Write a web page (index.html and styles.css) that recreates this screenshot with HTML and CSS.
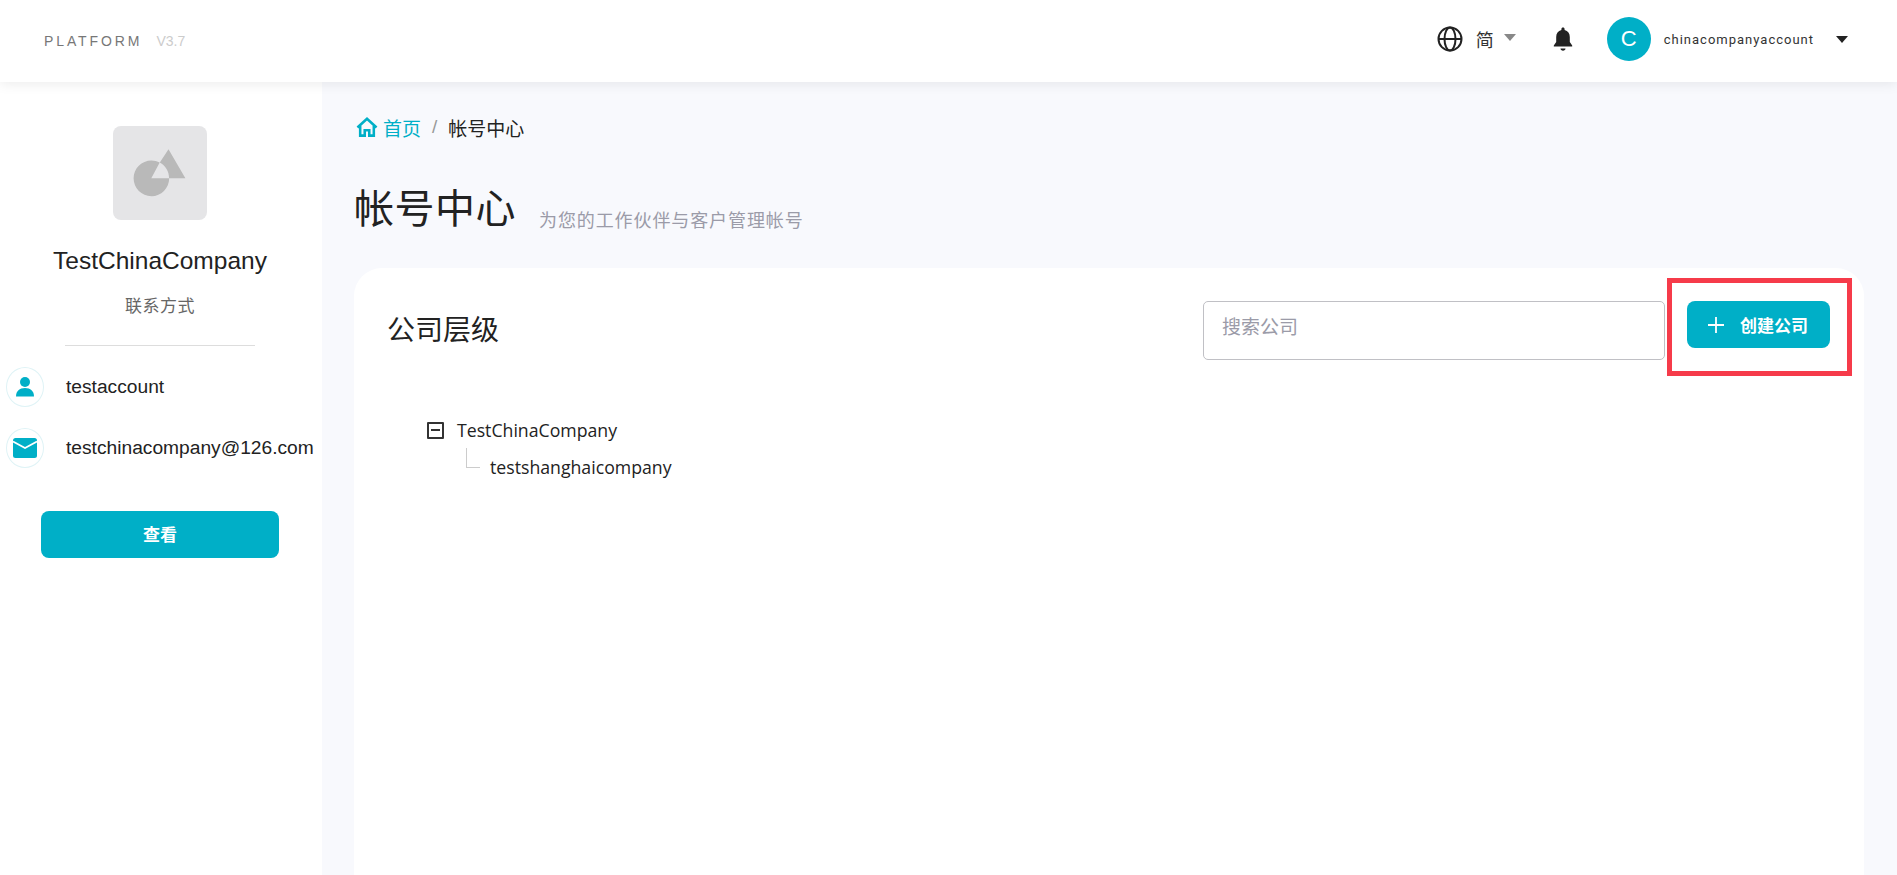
FILE: index.html
```html
<!DOCTYPE html>
<html lang="zh-CN">
<head>
<meta charset="utf-8">
<title>帐号中心</title>
<link rel="stylesheet" href="styles.css">
</head>
<body>
<header class="topbar">
  <div class="brand"><span class="brand-name">PLATFORM</span><span class="brand-ver">V3.7</span></div>
  <div class="top-actions">
    <svg class="globe" viewBox="0 0 26 26" fill="none" stroke="#222" stroke-width="2"><circle cx="13" cy="13" r="11.5"/><ellipse cx="13" cy="13" rx="5.5" ry="11.5"/><path d="M1.5 13h23"/></svg>
    <span class="lang">简</span>
    <span class="caret caret-grey"></span>
    <svg class="bell" viewBox="0 0 20 24" fill="#222"><path d="M10 0.5c1 0 1.6.7 1.6 1.7v.7c3.4.8 5.2 3.6 5.2 7v5l2.4 3.6v1H.8v-1l2.4-3.6v-5c0-3.4 1.800-6.200 5.200-7v-.7c0-1 .6-1.700 1.600-1.700z"/><path d="M7.500 21.500h5c0 1.400-1.100 2.200-2.500 2.200s-2.500-.8-2.500-2.200z"/></svg>
    <span class="avatar">C</span>
    <span class="username">chinacompanyaccount</span>
    <span class="caret caret-dark"></span>
  </div>
</header>
<div class="layout">
  <aside class="sidebar">
    <div class="logo-box">
      <svg viewBox="0 0 54 48" width="54" height="48"><path fill="#b9b9b9" d="M18.500 11.500c3 0 5.800.7 8.200 2L18.300 29.200h17.900c0 9.900-8 18-17.700 18C8.600 47.200.6 39.200.6 29.300.6 19.500 8.600 11.500 18.500 11.500z"/><path fill="#b9b9b9" d="M35.500.2L52.400 29.200H36.100c0-6.700-3.700-12.500-9.300-15.600z"/></svg>
    </div>
    <div class="company">TestChinaCompany</div>
    <div class="contact-label">联系方式</div>
    <div class="divider"></div>
    <div class="contact-row">
      <span class="contact-icon"><svg viewBox="0 0 18 20" width="18" height="20" fill="#00afc7"><circle cx="9" cy="5" r="5"/><path d="M0 19.500c0-5.500 3.500-8.500 9-8.500s9 3 9 8.500z"/></svg></span>
      <span class="contact-text">testaccount</span>
    </div>
    <div class="contact-row">
      <span class="contact-icon"><svg viewBox="0 0 24 20" width="24" height="20"><rect width="24" height="20" rx="2.500" fill="#00afc7"/><path d="M0 3.500l12 6.500 12-6.500" fill="none" stroke="#fff" stroke-width="1.800"/></svg></span>
      <span class="contact-text">testchinacompany@126.com</span>
    </div>
    <button class="view-btn">查看</button>
  </aside>
  <main class="main">
    <nav class="crumbs">
      <svg class="home" viewBox="0 0 24 22" fill="none" stroke="#00afc7" stroke-width="2.800"><path d="M1.500 11.500L12 2l10.500 9.500"/><path d="M4.500 10v10.500h5v-6h5v6h5V10"/></svg>
      <span class="crumb-link">首页</span>
      <span class="crumb-sep">/</span>
      <span class="crumb-cur">帐号中心</span>
    </nav>
    <div class="page-head">
      <h1 class="page-title">帐号中心</h1>
      <span class="page-sub">为您的工作伙伴与客户管理帐号</span>
    </div>
    <section class="card">
      <div class="card-head">
        <h2 class="card-title">公司层级</h2>
        <div class="search">搜索公司</div>
        <div class="create-wrap">
          <button class="create-btn"><svg viewBox="0 0 16 16" width="16" height="16" stroke="#fff" stroke-width="1.800"><path d="M8 0v16M0 8h16"/></svg><span>创建公司</span></button>
          <span class="mark"></span>
        </div>
      </div>
      <div class="tree">
        <div class="tree-node"><span class="tree-toggle"></span><span>TestChinaCompany</span></div>
        <div class="tree-child"><span class="tree-line"></span><span>testshanghaicompany</span></div>
      </div>
    </section>
  </main>
</div>
</body>
</html>
```
FILE: styles.css
```css
* { box-sizing: border-box; }
html, body { margin: 0; height: 100%; overflow: hidden; }
body {
  display: flex;
  flex-direction: column;
  font-family: "Liberation Sans", "Noto Sans CJK SC", sans-serif;
  color: #222;
  background: #f8f9fd;
}
.topbar {
  position: relative;
  z-index: 2;
  flex: 0 0 82px;
  display: flex;
  align-items: center;
  justify-content: space-between;
  padding: 0 49px 0 44px;
  background: #fff;
  box-shadow: 0 2px 12px rgba(0, 0, 0, .08);
}
.brand { display: flex; align-items: center; gap: 14px; margin-top: -1px; }
.brand-name { font-size: 14px; letter-spacing: 2.9px; color: #777; }
.brand-ver { font-size: 14px; color: #ccc; }
.top-actions { display: flex; align-items: center; margin-top: -4px; }
.globe { width: 26px; height: 26px; }
.lang { font-size: 18px; margin-left: 13px; color: #333; }
.caret { width: 0; height: 0; border-left: 6px solid transparent; border-right: 6px solid transparent; border-top: 7px solid #888; }
.caret-grey { margin: -3px 0 0 10px; }
.caret-dark { border-top-color: #222; margin-left: 22px; }
.bell { width: 20px; height: 24px; margin-left: 37px; }
.avatar {
  width: 44px; height: 44px; margin-left: 34px;
  display: flex; align-items: center; justify-content: center;
  border-radius: 50%;
  background: #00afc7; color: #fff; font-size: 22px;
}
.username { font-family: Roboto, sans-serif; font-size: 13px; letter-spacing: 1px; color: #333; margin-left: 13px; }
.layout { flex: 1; display: flex; min-height: 0; }
.sidebar {
  flex: 0 0 322px;
  display: flex; flex-direction: column; align-items: center;
  padding: 44px 2px 0 0;
  background: #fff;
}
.logo-box {
  width: 94px; height: 94px;
  display: flex; align-items: center; justify-content: center;
  border-radius: 8px; background: #e5e5e7;
}
.company { margin-top: 26px; font-size: 24.5px; line-height: 30px; color: #222; }
.contact-label { margin-top: 19px; font-size: 17px; line-height: 24px; letter-spacing: .5px; color: #666; }
.divider { width: 190px; height: 1px; margin-top: 26px; background: #ddd; }
.contact-row { align-self: stretch; display: flex; align-items: center; gap: 22px; padding-left: 6px; height: 40px; margin-top: 21px; white-space: nowrap; }
.contact-icon {
  flex: 0 0 38px; height: 40px;
  display: flex; align-items: center; justify-content: center;
  border: 1px solid #dff3f6; border-radius: 50%;
}
.contact-text { font-size: 19.2px; color: #222; }
.view-btn {
  width: 238px; height: 47px; margin-top: 43px; padding: 0 0 2px;
  border: 0; border-radius: 8px;
  background: #00afc7; color: #fff;
  font: 700 17px "Liberation Sans", "Noto Sans CJK SC", sans-serif;
}
.main { flex: 1; min-width: 0; display: flex; flex-direction: column; padding: 32px 33px 0 32px; }
.crumbs { display: flex; align-items: center; height: 26px; font-size: 19px; }
.home { width: 22px; height: 20px; margin-left: 2px; }
.crumb-link { color: #00afc7; margin-left: 5px; }
.crumb-sep { color: #999; margin: 0 11px; }
.crumb-cur { color: #222; }
.page-head { display: flex; align-items: flex-start; margin-top: 40px; height: 88px; }
.page-title { margin: 0; font-size: 40px; letter-spacing: .5px; font-weight: 400; line-height: 58px; color: #222; }
.page-sub { margin: 28px 0 0 23px; font-size: 18px; line-height: 26px; letter-spacing: .9px; color: #9b9ba8; }
.card { flex: 1; padding: 33px 34px 0 33px; border-radius: 28px 28px 0 0; background: #fff; }
.card-head { display: flex; align-items: flex-start; }
.card-title { margin: 10px 0 0; flex: 1; font-size: 28px; font-weight: 400; line-height: 40px; color: #222; }
.search {
  width: 462px; height: 59px;
  padding: 10px 18px;
  border: 1px solid #c0c0c5; border-radius: 5px;
  font-size: 19px; color: #9b9ba8;
}
.create-wrap { position: relative; margin-left: 22px; }
.create-btn {
  display: flex; align-items: center;
  width: 143px; height: 47px; padding: 0 0 0 21px;
  border: 0; border-radius: 8px;
  background: #00afc7; color: #fff;
  font: 700 17px "Liberation Sans", "Noto Sans CJK SC", sans-serif;
}
.create-btn span { margin-left: 16px; }
.mark {
  position: absolute; left: -20px; top: -23px;
  width: 185px; height: 98px;
  border: 5px solid #f63b4a;
  pointer-events: none;
}
.tree { margin-top: 55px; padding-left: 40px; font-family: "Open Sans", sans-serif; font-size: 17.7px; color: #222; }
.tree-node { display: flex; align-items: center; height: 30px; }
.tree-toggle { position: relative; width: 17px; height: 17px; margin-right: 13px; border: 2px solid #333; border-radius: 1px; }
.tree-toggle::after { content: ""; position: absolute; left: 2px; right: 2px; top: 5.500px; height: 2px; background: #333; }
.tree-child { display: flex; align-items: center; height: 30px; margin-top: 7px; margin-left: 39px; }
.tree-line { width: 14px; height: 20px; margin: -18px 10px 0 0; border-left: 1px solid #ccc; border-bottom: 1px solid #ccc; }
```
